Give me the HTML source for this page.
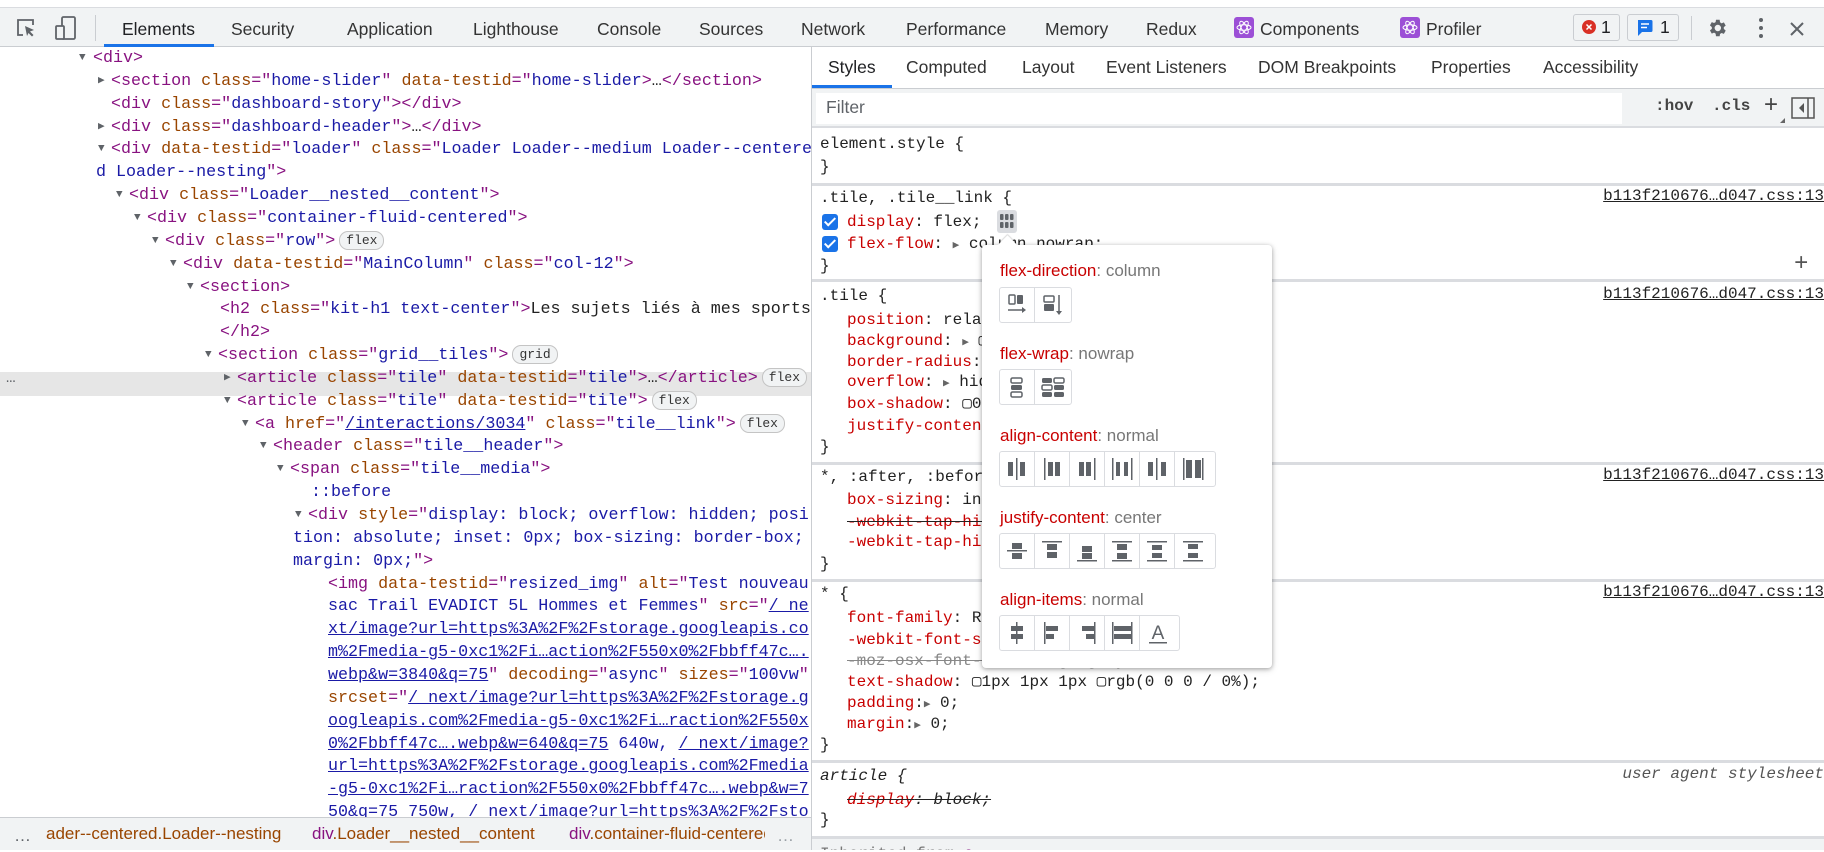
<!DOCTYPE html>
<html><head><meta charset="utf-8"><style>
*{box-sizing:border-box;margin:0;padding:0}
body{width:1824px;height:850px;overflow:hidden;background:#fff;position:relative;font-family:"Liberation Sans",Arial,sans-serif;color:#202124}
.abs{position:absolute;white-space:pre}
.mono{font-family:"Liberation Mono","DejaVu Sans Mono",monospace}
#top{position:absolute;left:0;top:7px;width:1824px;height:40px;background:#f1f3f4;border-top:1px solid #dadce0;border-bottom:1px solid #cacdd1}
.tab{position:absolute;top:11px;font-size:17.5px;color:#333}
#left{position:absolute;left:0;top:47px;width:812px;height:770px;overflow:hidden;border-right:1px solid #cacdd1}
.ln{position:absolute;height:23px;line-height:23px;font-size:16.7px;white-space:pre}
.tg{color:#881280}.an{color:#994500}.av{color:#1a1aa6}.lk{color:#1a1aa6;text-decoration:underline}.tx{color:#222}
.tri{position:absolute;font-size:11px;color:#5f6368;top:0}
.badge{display:inline-block;font-size:13px;line-height:17px;height:19px;padding:0 6px;border:1px solid #c4c4c4;border-radius:9px;background:#f1f3f4;color:#333;vertical-align:1px;margin-left:4px}
#bc{position:absolute;left:0;top:817px;width:812px;height:33px;background:#f1f3f4;border-top:1px solid #cacdd1;border-right:1px solid #cacdd1;font-size:17px;line-height:32px}
#right{position:absolute;left:812px;top:47px;width:1012px;height:803px;overflow:hidden}
.rl{position:absolute;font-size:16px;line-height:22px;height:22px;white-space:pre;color:#222}
.pn{color:#c80000}
.src{position:absolute;right:0;font-size:16px;color:#222;text-decoration:underline;white-space:pre}
.sep{position:absolute;left:0;width:1012px;height:3px;background:#dadce0}
.cb{position:absolute;width:16px;height:16px;background:#1a73e8;border-radius:3px}
.cb:after{content:"";position:absolute;left:5px;top:1px;width:4px;height:9px;border:solid #fff;border-width:0 2px 2px 0;transform:rotate(45deg)}
#pop{position:absolute;left:982px;top:245px;width:290px;height:423px;background:#fff;border-radius:4px;box-shadow:0 1px 4px rgba(0,0,0,.3),0 2px 8px rgba(0,0,0,.12)}
.pl{position:absolute;left:18px;font-size:17px;color:#777;white-space:pre}
.pl b{font-weight:normal;color:#c80000}
.bg{position:absolute;left:17px;height:36px;border:1px solid #dadce0;border-radius:3px;display:flex;background:#fff}
.bg span{width:35px;height:34px;border-right:1px solid #dadce0;display:flex;align-items:center;justify-content:center}
.bg span:last-child{border-right:none}
</style></head><body>

<div id="top">
  <svg class="abs" style="left:15px;top:9px" width="22" height="22" viewBox="0 0 22 22"><path d="M8 18H3V3h15v5" fill="none" stroke="#5f6368" stroke-width="1.8"/><path d="M10 9l9 4-4 1.5 3.5 3.5-1.5 1.5-3.5-3.5L12 19z" fill="#5f6368"/></svg>
  <svg class="abs" style="left:54px;top:7px" width="24" height="26" viewBox="0 0 24 26"><rect x="8" y="2" width="13" height="22" rx="1.5" fill="none" stroke="#5f6368" stroke-width="1.8"/><rect x="2" y="11" width="8" height="13" rx="1" fill="#f1f3f4" stroke="#5f6368" stroke-width="1.8"/></svg>
  <div class="abs" style="left:95px;top:7px;width:1px;height:26px;background:#cacdd1"></div>
  <div class="tab" style="left:122px;color:#202124">Elements</div>
  <div class="abs" style="left:104px;top:36px;width:110px;height:3px;background:#1a73e8"></div>
  <div class="tab" style="left:231px">Security</div>
  <div class="tab" style="left:347px">Application</div>
  <div class="tab" style="left:473px">Lighthouse</div>
  <div class="tab" style="left:597px">Console</div>
  <div class="tab" style="left:699px">Sources</div>
  <div class="tab" style="left:801px">Network</div>
  <div class="tab" style="left:906px">Performance</div>
  <div class="tab" style="left:1045px">Memory</div>
  <div class="tab" style="left:1146px">Redux</div>
  <svg class="abs" style="left:1234px;top:9px" width="20" height="21" viewBox="0 0 20 21"><rect width="20" height="21" rx="3" fill="#9c4fd6"/><g fill="none" stroke="#fff" stroke-width="1"><ellipse cx="10" cy="10.5" rx="7" ry="2.8"/><ellipse cx="10" cy="10.5" rx="7" ry="2.8" transform="rotate(60 10 10.5)"/><ellipse cx="10" cy="10.5" rx="7" ry="2.8" transform="rotate(120 10 10.5)"/></g></svg>
  <div class="tab" style="left:1260px">Components</div>
  <svg class="abs" style="left:1400px;top:9px" width="20" height="21" viewBox="0 0 20 21"><rect width="20" height="21" rx="3" fill="#9c4fd6"/><g fill="none" stroke="#fff" stroke-width="1"><ellipse cx="10" cy="10.5" rx="7" ry="2.8"/><ellipse cx="10" cy="10.5" rx="7" ry="2.8" transform="rotate(60 10 10.5)"/><ellipse cx="10" cy="10.5" rx="7" ry="2.8" transform="rotate(120 10 10.5)"/></g></svg>
  <div class="tab" style="left:1426px">Profiler</div>
  <div class="abs" style="left:1573px;top:6px;width:47px;height:27px;border:1px solid #cacdd1;border-radius:3px;background:#f1f3f4"></div>
  <svg class="abs" style="left:1582px;top:12px" width="14" height="14"><circle cx="7" cy="7" r="7" fill="#d93025"/><path d="M4.5 4.5l5 5M9.5 4.5l-5 5" stroke="#fff" stroke-width="1.5"/></svg>
  <div class="tab" style="left:1601px;top:9px;color:#202124">1</div>
  <div class="abs" style="left:1627px;top:6px;width:52px;height:27px;border:1px solid #cacdd1;border-radius:3px;background:#f1f3f4"></div>
  <svg class="abs" style="left:1636px;top:11px" width="17" height="18"><path d="M2 1h13a1.5 1.5 0 0 1 1.5 1.5v9A1.5 1.5 0 0 1 15 13H6l-4 4z" fill="#1a73e8"/><path d="M5 5h8M5 8.5h6" stroke="#fff" stroke-width="1.5"/></svg>
  <div class="tab" style="left:1660px;top:9px;color:#202124">1</div>
  <div class="abs" style="left:1691px;top:8px;width:1px;height:24px;background:#cacdd1"></div>
  <svg class="abs" style="left:1706px;top:9px" width="22" height="22" viewBox="0 0 24 24"><path fill="#5f6368" d="M19.4 13a7.5 7.5 0 0 0 0-2l2.1-1.6-2-3.5-2.5 1a7.3 7.3 0 0 0-1.7-1L14.9 3h-4l-.4 2.6a7.3 7.3 0 0 0-1.7 1l-2.5-1-2 3.5L6.4 11a7.5 7.5 0 0 0 0 2l-2.1 1.6 2 3.5 2.5-1a7.3 7.3 0 0 0 1.7 1l.4 2.9h4l.4-2.6a7.3 7.3 0 0 0 1.7-1l2.5 1 2-3.5zM12.9 15.5a3.5 3.5 0 1 1 0-7 3.5 3.5 0 0 1 0 7z"/></svg>
  <svg class="abs" style="left:1758px;top:9px" width="6" height="22"><circle cx="3" cy="3" r="2" fill="#5f6368"/><circle cx="3" cy="11" r="2" fill="#5f6368"/><circle cx="3" cy="19" r="2" fill="#5f6368"/></svg>
  <svg class="abs" style="left:1789px;top:13px" width="16" height="16"><path d="M2 2l12 12M14 2L2 14" stroke="#5f6368" stroke-width="2"/></svg>
</div>

<div id="left" class="mono">
  <div class="abs" style="left:0;top:325px;width:811px;height:24px;background:#e6e6e6"></div>
  <div class="abs" style="left:6px;top:322px;font-size:16px;color:#5f6368">…</div>
  <div class="ln" style="top:0;left:93px"><span class="tri" style="left:-14px">▼</span><span class="tg">&lt;div&gt;</span></div>
  <div class="ln" style="top:22.85px;left:111px"><span class="tri" style="left:-13px">▶</span><span class="tg">&lt;section </span><span class="an">class</span><span class="tg">="</span><span class="av">home-slider</span><span class="tg">" </span><span class="an">data-testid</span><span class="tg">="</span><span class="av">home-slider</span><span class="tg">&gt;</span><span class="tx">…</span><span class="tg">&lt;/section&gt;</span></div>
  <div class="ln" style="top:45.7px;left:111px"><span class="tg">&lt;div </span><span class="an">class</span><span class="tg">="</span><span class="av">dashboard-story</span><span class="tg">"&gt;&lt;/div&gt;</span></div>
  <div class="ln" style="top:68.55px;left:111px"><span class="tri" style="left:-13px">▶</span><span class="tg">&lt;div </span><span class="an">class</span><span class="tg">="</span><span class="av">dashboard-header</span><span class="tg">"&gt;</span><span class="tx">…</span><span class="tg">&lt;/div&gt;</span></div>
  <div class="ln" style="top:91.4px;left:111px"><span class="tri" style="left:-13px">▼</span><span class="tg">&lt;div </span><span class="an">data-testid</span><span class="tg">="</span><span class="av">loader</span><span class="tg">" </span><span class="an">class</span><span class="tg">="</span><span class="av">Loader Loader--medium Loader--centere</span></div>
  <div class="ln" style="top:114.25px;left:96px"><span class="av">d Loader--nesting</span><span class="tg">"&gt;</span></div>
  <div class="ln" style="top:137.1px;left:129px"><span class="tri" style="left:-13px">▼</span><span class="tg">&lt;div </span><span class="an">class</span><span class="tg">="</span><span class="av">Loader__nested__content</span><span class="tg">"&gt;</span></div>
  <div class="ln" style="top:159.95px;left:147px"><span class="tri" style="left:-13px">▼</span><span class="tg">&lt;div </span><span class="an">class</span><span class="tg">="</span><span class="av">container-fluid-centered</span><span class="tg">"&gt;</span></div>
  <div class="ln" style="top:182.8px;left:165px"><span class="tri" style="left:-13px">▼</span><span class="tg">&lt;div </span><span class="an">class</span><span class="tg">="</span><span class="av">row</span><span class="tg">"&gt;</span><span class="badge">flex</span></div>
  <div class="ln" style="top:205.65px;left:183px"><span class="tri" style="left:-13px">▼</span><span class="tg">&lt;div </span><span class="an">data-testid</span><span class="tg">="</span><span class="av">MainColumn</span><span class="tg">" </span><span class="an">class</span><span class="tg">="</span><span class="av">col-12</span><span class="tg">"&gt;</span></div>
  <div class="ln" style="top:228.5px;left:200px"><span class="tri" style="left:-13px">▼</span><span class="tg">&lt;section&gt;</span></div>
  <div class="ln" style="top:251.35px;left:220px"><span class="tg">&lt;h2 </span><span class="an">class</span><span class="tg">="</span><span class="av">kit-h1 text-center</span><span class="tg">"&gt;</span><span class="tx">Les sujets liés à mes sports</span></div>
  <div class="ln" style="top:274.2px;left:220px"><span class="tg">&lt;/h2&gt;</span></div>
  <div class="ln" style="top:297.05px;left:218px"><span class="tri" style="left:-13px">▼</span><span class="tg">&lt;section </span><span class="an">class</span><span class="tg">="</span><span class="av">grid__tiles</span><span class="tg">"&gt;</span><span class="badge">grid</span></div>
  <div class="ln" style="top:319.9px;left:237px"><span class="tri" style="left:-13px">▶</span><span class="tg">&lt;article </span><span class="an">class</span><span class="tg">="</span><span class="av">tile</span><span class="tg">" </span><span class="an">data-testid</span><span class="tg">="</span><span class="av">tile</span><span class="tg">"&gt;</span><span class="tx">…</span><span class="tg">&lt;/article&gt;</span><span class="badge">flex</span></div>
  <div class="ln" style="top:342.75px;left:237px"><span class="tri" style="left:-13px">▼</span><span class="tg">&lt;article </span><span class="an">class</span><span class="tg">="</span><span class="av">tile</span><span class="tg">" </span><span class="an">data-testid</span><span class="tg">="</span><span class="av">tile</span><span class="tg">"&gt;</span><span class="badge">flex</span></div>
  <div class="ln" style="top:365.6px;left:255px"><span class="tri" style="left:-13px">▼</span><span class="tg">&lt;a </span><span class="an">href</span><span class="tg">="</span><span class="lk">/interactions/3034</span><span class="tg">" </span><span class="an">class</span><span class="tg">="</span><span class="av">tile__link</span><span class="tg">"&gt;</span><span class="badge">flex</span></div>
  <div class="ln" style="top:388.45px;left:273px"><span class="tri" style="left:-13px">▼</span><span class="tg">&lt;header </span><span class="an">class</span><span class="tg">="</span><span class="av">tile__header</span><span class="tg">"&gt;</span></div>
  <div class="ln" style="top:411.3px;left:290px"><span class="tri" style="left:-13px">▼</span><span class="tg">&lt;span </span><span class="an">class</span><span class="tg">="</span><span class="av">tile__media</span><span class="tg">"&gt;</span></div>
  <div class="ln" style="top:434.15px;left:311px"><span class="av">::before</span></div>
  <div class="ln" style="top:457px;left:308px"><span class="tri" style="left:-13px">▼</span><span class="tg">&lt;div </span><span class="an">style</span><span class="tg">="</span><span class="av">display: block; overflow: hidden; posi</span></div>
  <div class="ln av" style="top:479.85px;left:293px">tion: absolute; inset: 0px; box-sizing: border-box;</div>
  <div class="ln" style="top:502.7px;left:293px"><span class="av">margin: 0px;</span><span class="tg">"&gt;</span></div>
  <div class="ln" style="top:525.55px;left:328px"><span class="tg">&lt;img </span><span class="an">data-testid</span><span class="tg">="</span><span class="av">resized_img</span><span class="tg">" </span><span class="an">alt</span><span class="tg">="</span><span class="av">Test nouveau</span></div>
  <div class="ln" style="top:548.4px;left:328px"><span class="av">sac Trail EVADICT 5L Hommes et Femmes</span><span class="tg">" </span><span class="an">src</span><span class="tg">="</span><span class="lk">/_ne</span></div>
  <div class="ln lk" style="top:571.25px;left:328px">xt/image?url=https%3A%2F%2Fstorage.googleapis.co</div>
  <div class="ln lk" style="top:594.1px;left:328px">m%2Fmedia-g5-0xc1%2Fi…action%2F550x0%2Fbbff47c….</div>
  <div class="ln" style="top:616.95px;left:328px"><span class="lk">webp&amp;w=3840&amp;q=75</span><span class="tg">" </span><span class="an">decoding</span><span class="tg">="</span><span class="av">async</span><span class="tg">" </span><span class="an">sizes</span><span class="tg">="</span><span class="av">100vw</span><span class="tg">"</span></div>
  <div class="ln" style="top:639.8px;left:328px"><span class="an">srcset</span><span class="tg">="</span><span class="lk">/_next/image?url=https%3A%2F%2Fstorage.g</span></div>
  <div class="ln lk" style="top:662.65px;left:328px">oogleapis.com%2Fmedia-g5-0xc1%2Fi…raction%2F550x</div>
  <div class="ln" style="top:685.5px;left:328px"><span class="lk">0%2Fbbff47c….webp&amp;w=640&amp;q=75</span><span class="av"> 640w, </span><span class="lk">/_next/image?</span></div>
  <div class="ln lk" style="top:708.35px;left:328px">url=https%3A%2F%2Fstorage.googleapis.com%2Fmedia</div>
  <div class="ln lk" style="top:731.2px;left:328px">-g5-0xc1%2Fi…raction%2F550x0%2Fbbff47c….webp&amp;w=7</div>
  <div class="ln" style="top:754.05px;left:328px"><span class="lk">50&amp;q=75</span><span class="av"> 750w, </span><span class="lk">/_next/image?url=https%3A%2F%2Fsto</span></div>
</div>

<div id="bc">
  <span class="abs" style="left:14px;top:2px;color:#5f6368">…</span>
  <span class="abs" style="left:46px;color:#994500">ader--centered.Loader--nesting</span>
  <span class="abs" style="left:312px"><span class="tg">div</span><span class="an">.Loader__nested__content</span></span>
  <span class="abs" style="left:569px;width:196px;overflow:hidden"><span class="tg">div</span><span class="an">.container-fluid-centered</span></span>
  <span class="abs" style="left:777px;top:2px;color:#9aa0a6">…</span>
</div>

<div id="right">
  <div class="abs" style="left:0;top:0;width:1012px;height:42px;border-bottom:1px solid #cacdd1;background:#fff"></div>
  <div class="tab" style="left:16px;top:10px;color:#202124">Styles</div>
  <div class="abs" style="left:0;top:38px;width:80px;height:3px;background:#1a73e8"></div>
  <div class="tab" style="left:94px;top:10px">Computed</div>
  <div class="tab" style="left:210px;top:10px">Layout</div>
  <div class="tab" style="left:294px;top:10px">Event Listeners</div>
  <div class="tab" style="left:446px;top:10px">DOM Breakpoints</div>
  <div class="tab" style="left:619px;top:10px">Properties</div>
  <div class="tab" style="left:731px;top:10px">Accessibility</div>
  <div class="abs" style="left:0;top:42px;width:1012px;height:39px;background:#f1f3f4;border-bottom:2px solid #dadce0"></div>
  <div class="abs" style="left:4px;top:46px;width:806px;height:31px;background:#fff"></div>
  <div class="abs" style="left:14px;top:50px;font-size:17.5px;color:#5f6368">Filter</div>
  <div class="abs mono" style="left:843px;top:50px;font-size:16px;font-weight:bold;color:#444">:hov</div>
  <div class="abs mono" style="left:900px;top:50px;font-size:16px;font-weight:bold;color:#444">.cls</div>
  <div class="abs" style="left:952px;top:44px;font-size:24px;color:#444">+</div>
  <div class="abs" style="left:968px;top:71px;width:0;height:0;border-left:5px solid transparent;border-bottom:5px solid #666"></div>
  <svg class="abs" style="left:979px;top:50px" width="24" height="22"><rect x="1" y="1" width="22" height="20" fill="none" stroke="#555" stroke-width="1.5"/><path d="M17 1v20" stroke="#555" stroke-width="1.5"/><path d="M13 6v10l-5-5z" fill="#555"/></svg>

  <div class="mono">
  <div class="rl" style="left:8px;top:86px">element.style {</div>
  <div class="rl" style="left:8px;top:109px">}</div>
  <div class="sep" style="top:136px"></div>

  <div class="rl" style="left:8px;top:140px">.tile, .tile__link {</div>
  <div class="src" style="top:140px">b113f210676…d047.css:13</div>
  <div class="cb" style="left:10px;top:167px"></div>
  <div class="rl" style="left:35px;top:164px"><span class="pn">display</span>: flex;</div>
  <div class="abs" style="left:185px;top:163px;width:20px;height:23px;background:#dadce0;border-radius:3px"></div>
  <svg class="abs" style="left:188px;top:167px" width="14" height="14"><g fill="#5f6368"><rect x="0" y="0" width="3.5" height="6" rx="1"/><rect x="5" y="0" width="3.5" height="6" rx="1"/><rect x="10" y="0" width="3.5" height="6" rx="1"/><rect x="0" y="8" width="3.5" height="6" rx="1"/><rect x="5" y="8" width="3.5" height="6" rx="1"/><rect x="10" y="8" width="3.5" height="6" rx="1"/></g></svg>
  <div class="cb" style="left:10px;top:189px"></div>
  <div class="rl" style="left:35px;top:186px"><span class="pn">flex-flow</span>: <span style="font-size:11px;color:#666">▶</span> column nowrap;</div>
  <div class="rl" style="left:8px;top:208px">}</div>
  <div class="abs" style="left:982px;top:204px;font-size:24px;color:#555">+</div>
  <div class="sep" style="top:232px"></div>

  <div class="rl" style="left:8px;top:238px">.tile {</div>
  <div class="src" style="top:238px">b113f210676…d047.css:13</div>
  <div class="rl" style="left:35px;top:262px"><span class="pn">position</span>: relative;</div>
  <div class="rl" style="left:35px;top:283px"><span class="pn">background</span>: <span style="font-size:11px;color:#666">▶</span> ▢ var(--tile-bg);</div>
  <div class="rl" style="left:35px;top:304px"><span class="pn">border-radius</span>: 4px;</div>
  <div class="rl" style="left:35px;top:324px"><span class="pn">overflow</span>: <span style="font-size:11px;color:#666">▶</span> hidden;</div>
  <div class="rl" style="left:35px;top:346px"><span class="pn">box-shadow</span>: ▢0 1px 4px rgba(0,0,0,0.25));</div>
  <div class="rl" style="left:35px;top:368px"><span class="pn">justify-content</span>: center;</div>
  <div class="rl" style="left:8px;top:389px">}</div>
  <div class="sep" style="top:415px"></div>

  <div class="rl" style="left:8px;top:419px">*, :after, :before {</div>
  <div class="src" style="top:419px">b113f210676…d047.css:13</div>
  <div class="rl" style="left:35px;top:442px"><span class="pn">box-sizing</span>: inherit;</div>
  <div class="rl" style="left:35px;top:464px;text-decoration:line-through"><span class="pn">-webkit-tap-highlight-color</span>: rgba(0,0,0,0));</div>
  <div class="rl" style="left:35px;top:484px"><span class="pn">-webkit-tap-highlight-color</span>: transparent;</div>
  <div class="rl" style="left:8px;top:506px">}</div>
  <div class="sep" style="top:532px"></div>

  <div class="rl" style="left:8px;top:536px">* {</div>
  <div class="src" style="top:536px">b113f210676…d047.css:13</div>
  <div class="rl" style="left:35px;top:560px"><span class="pn">font-family</span>: Roboto, sans-serif;</div>
  <div class="rl" style="left:35px;top:582px"><span class="pn">-webkit-font-smoothing</span>: antialiased;</div>
  <div class="rl" style="left:35px;top:603px;color:#888;text-decoration:line-through">-moz-osx-font-smoothing: grayscale;</div>
  <div class="rl" style="left:35px;top:624px"><span class="pn">text-shadow</span>: ▢1px 1px 1px ▢rgb(0 0 0 / 0%);</div>
  <div class="rl" style="left:35px;top:645px"><span class="pn">padding</span>:<span style="font-size:11px;color:#666">▶</span> 0;</div>
  <div class="rl" style="left:35px;top:666px"><span class="pn">margin</span>:<span style="font-size:11px;color:#666">▶</span> 0;</div>
  <div class="rl" style="left:8px;top:687px">}</div>
  <div class="sep" style="top:713px"></div>

  <div class="rl" style="left:8px;top:718px;font-style:italic">article {</div>
  <div class="abs" style="right:0;top:718px;font-size:16px;font-style:italic;color:#555">user agent stylesheet</div>
  <div class="rl" style="left:35px;top:742px;text-decoration:line-through;font-style:italic"><span class="pn">display</span>: block;</div>
  <div class="rl" style="left:8px;top:762px">}</div>
  <div class="sep" style="top:789px"></div>
  <div class="abs" style="left:0;top:792px;width:1012px;height:20px;background:#f1f3f4"></div>
  <div class="rl" style="left:8px;top:796px;color:#777">Inherited from <span class="tg">a</span></div>
  </div>
</div>

<div id="pop">
  <div class="abs" style="left:19px;top:-7px;width:13px;height:13px;background:#fff;transform:rotate(45deg);box-shadow:-1px -1px 1px rgba(0,0,0,.15)"></div>
  <div class="pl" style="top:16px"><b>flex-direction</b>: column</div>
  <div class="bg" style="top:42px;width:73px">
    <span><svg width="22" height="24"><rect x="3" y="2" width="6" height="9" rx="1" fill="none" stroke="#5f6368" stroke-width="1.5"/><rect x="11" y="2" width="6" height="9" rx="1" fill="#5f6368"/><path d="M2 17h16" stroke="#5f6368" stroke-width="1.5"/><path d="M16 14l4 3-4 3z" fill="#5f6368"/></svg></span>
    <span><svg width="22" height="24"><rect x="2" y="3" width="10" height="6" rx="1" fill="none" stroke="#5f6368" stroke-width="1.5"/><rect x="2" y="11" width="10" height="7" rx="1" fill="#5f6368"/><path d="M17 2v18" stroke="#5f6368" stroke-width="1.5"/><path d="M14 18l3 4 3-4z" fill="#5f6368"/></svg></span>
  </div>
  <div class="pl" style="top:99px"><b>flex-wrap</b>: nowrap</div>
  <div class="bg" style="top:124px;width:73px">
    <span><svg width="22" height="24"><rect x="5" y="3" width="11" height="5" rx="1.5" fill="none" stroke="#5f6368" stroke-width="1.5"/><rect x="5" y="10" width="11" height="5" rx="1.5" fill="#5f6368"/><rect x="5" y="17" width="11" height="5" rx="1.5" fill="none" stroke="#5f6368" stroke-width="1.5"/></svg></span>
    <span><svg width="24" height="24"><rect x="1" y="3" width="10" height="5" rx="1.5" fill="#5f6368"/><rect x="13" y="3" width="10" height="5" rx="1.5" fill="none" stroke="#5f6368" stroke-width="1.5"/><rect x="1" y="10" width="10" height="5" rx="1.5" fill="none" stroke="#5f6368" stroke-width="1.5"/><rect x="13" y="10" width="10" height="5" rx="1.5" fill="#5f6368"/><rect x="1" y="17" width="10" height="5" rx="1.5" fill="#5f6368"/><rect x="13" y="17" width="10" height="5" rx="1.5" fill="#5f6368"/></svg></span>
  </div>
  <div class="pl" style="top:181px"><b>align-content</b>: normal</div>
  <div class="bg" style="top:206px;width:217px">
    <span><svg width="24" height="24" fill="#5f6368"><rect x="3" y="5" width="5" height="14"/><rect x="11" y="1" width="1.5" height="22"/><rect x="15" y="5" width="5" height="14"/></svg></span>
    <span><svg width="24" height="24" fill="#5f6368"><rect x="4" y="1" width="1.5" height="22"/><rect x="8" y="5" width="5" height="14"/><rect x="15" y="5" width="5" height="14"/></svg></span>
    <span><svg width="24" height="24" fill="#5f6368"><rect x="4" y="5" width="5" height="14"/><rect x="11" y="5" width="5" height="14"/><rect x="19" y="1" width="1.5" height="22"/></svg></span>
    <span><svg width="24" height="24" fill="#5f6368"><rect x="2" y="1" width="1.5" height="22"/><rect x="6" y="5" width="4" height="14"/><rect x="14" y="5" width="4" height="14"/><rect x="21" y="1" width="1.5" height="22"/></svg></span>
    <span><svg width="24" height="24" fill="#5f6368"><rect x="3" y="5" width="5" height="14"/><rect x="11" y="1" width="1.5" height="22"/><rect x="16" y="5" width="5" height="14"/></svg></span>
    <span><svg width="24" height="24" fill="#5f6368"><rect x="2" y="1" width="1.5" height="22"/><rect x="5" y="3" width="6" height="18"/><rect x="14" y="3" width="6" height="18"/><rect x="21" y="1" width="1.5" height="22"/></svg></span>
  </div>
  <div class="pl" style="top:263px"><b>justify-content</b>: center</div>
  <div class="bg" style="top:288px;width:217px">
    <span><svg width="24" height="24" fill="#5f6368"><rect x="7" y="4" width="10" height="6"/><rect x="2" y="11" width="20" height="1.5"/><rect x="7" y="14" width="10" height="6"/></svg></span>
    <span><svg width="24" height="24" fill="#5f6368"><rect x="2" y="2" width="20" height="1.5"/><rect x="7" y="5" width="10" height="6"/><rect x="7" y="13" width="10" height="6"/></svg></span>
    <span><svg width="24" height="24" fill="#5f6368"><rect x="7" y="7" width="10" height="6"/><rect x="7" y="14" width="10" height="6"/><rect x="2" y="21" width="20" height="1.5"/></svg></span>
    <span><svg width="24" height="24" fill="#5f6368"><rect x="2" y="2" width="20" height="1.5"/><rect x="7" y="5" width="10" height="6"/><rect x="7" y="14" width="10" height="6"/><rect x="2" y="21" width="20" height="1.5"/></svg></span>
    <span><svg width="24" height="24" fill="#5f6368"><rect x="2" y="2" width="20" height="1.5"/><rect x="7" y="6" width="10" height="5"/><rect x="7" y="14" width="10" height="5"/><rect x="2" y="21" width="20" height="1.5"/></svg></span>
    <span><svg width="24" height="24" fill="#5f6368"><rect x="2" y="2" width="20" height="1.5"/><rect x="7" y="5" width="10" height="5"/><rect x="7" y="14" width="10" height="5"/><rect x="2" y="21" width="20" height="1.5"/></svg></span>
  </div>
  <div class="pl" style="top:345px"><b>align-items</b>: normal</div>
  <div class="bg" style="top:370px;width:181px">
    <span><svg width="24" height="24" fill="#5f6368"><rect x="11" y="1" width="1.5" height="22"/><rect x="6" y="5" width="12" height="5"/><rect x="6" y="13" width="12" height="5"/></svg></span>
    <span><svg width="24" height="24" fill="#5f6368"><rect x="4" y="1" width="1.5" height="22"/><rect x="6" y="5" width="12" height="5"/><rect x="6" y="13" width="8" height="5"/></svg></span>
    <span><svg width="24" height="24" fill="#5f6368"><rect x="19" y="1" width="1.5" height="22"/><rect x="7" y="5" width="12" height="5"/><rect x="11" y="13" width="8" height="5"/></svg></span>
    <span><svg width="24" height="24" fill="#5f6368"><rect x="2" y="1" width="1.5" height="22"/><rect x="21" y="1" width="1.5" height="22"/><rect x="4" y="5" width="17" height="5"/><rect x="4" y="13" width="17" height="5"/></svg></span>
    <span><svg width="24" height="24"><text x="12" y="18" text-anchor="middle" font-family="Liberation Sans,sans-serif" font-size="19" fill="#5f6368">A</text><rect x="3" y="21" width="18" height="1.5" fill="#5f6368"/></svg></span>
  </div>
</div>
</body></html>
